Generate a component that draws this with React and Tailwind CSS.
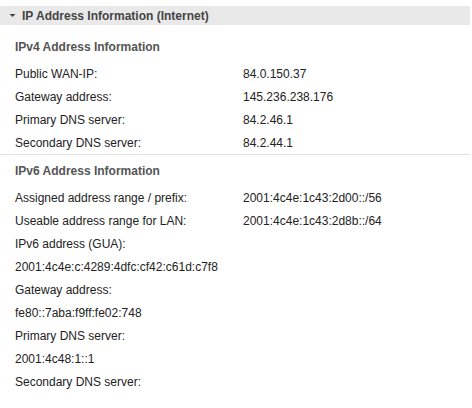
const ipv4 = [
  ["Public WAN-IP:", "84.0.150.37"],
  ["Gateway address:", "145.236.238.176"],
  ["Primary DNS server:", "84.2.46.1"],
  ["Secondary DNS server:", "84.2.44.1"],
];

const ipv6 = [
  ["Assigned address range / prefix:", "2001:4c4e:1c43:2d00::/56"],
  ["Useable address range for LAN:", "2001:4c4e:1c43:2d8b::/64"],
  ["IPv6 address (GUA):"],
  ["2001:4c4e:c:4289:4dfc:cf42:c61d:c7f8"],
  ["Gateway address:"],
  ["fe80::7aba:f9ff:fe02:748"],
  ["Primary DNS server:"],
  ["2001:4c48:1::1"],
  ["Secondary DNS server:"],
];

function Row({ label, value }) {
  return (
    <div className="flex h-[23px] items-center pl-[15px] text-[12px] text-[#222]">
      <span className="w-[228px] shrink-0 whitespace-nowrap">{label}</span>
      {value && <span className="whitespace-nowrap">{value}</span>}
    </div>
  );
}

function Section({ title, rows }) {
  return (
    <div>
      <div className="flex h-[23px] items-center pl-[15px] text-[12px] font-bold text-[#555]">
        {title}
      </div>
      <div className="mt-[4px]">
        {rows.map(([l, v], i) => (
          <Row key={i} label={l} value={v} />
        ))}
      </div>
    </div>
  );
}

export default function App() {
  return (
    <div className="h-[408px] w-[472px] overflow-hidden bg-white font-['Liberation_Sans',Arial,sans-serif]">
      <div className="mt-[6px] flex h-[19px] w-[470px] items-center bg-[#e9e9e9]">
        <svg width="22" height="19" viewBox="0 0 22 19" className="shrink-0">
          <polygon points="9.5,8 15.5,8 12.5,11" fill="#444" />
        </svg>
        <span className="text-[12px] font-bold text-[#444]">IP Address Information (Internet)</span>
      </div>
      <div className="pt-[10px]">
        <Section title="IPv4 Address Information" rows={ipv4} />
      </div>
      <div className="h-px w-[470px] bg-[#e3e3e3]" />
      <div className="pt-[4px]">
        <Section title="IPv6 Address Information" rows={ipv6} />
      </div>
    </div>
  );
}
